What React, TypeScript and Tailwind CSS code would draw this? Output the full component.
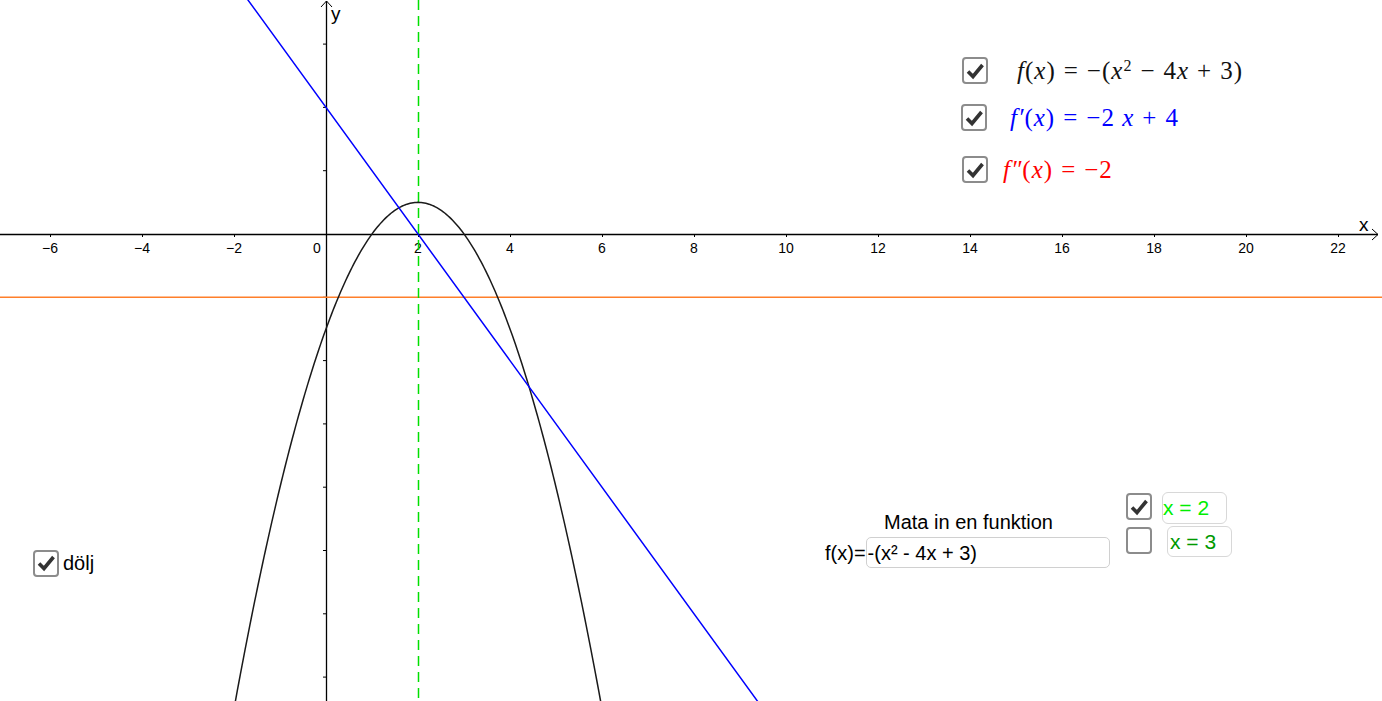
import type { ReactNode } from 'react';

const W = 1382;
const H = 701;
const OX = 326; // pixel of x = 0
const OY = 234; // pixel of y = 0
const SX = 46; // px per unit on x
const SY = 31.65; // px per unit on y

const px = (x: number) => OX + x * SX;
const py = (y: number) => OY - y * SY;

function plot(fn: (x: number) => number, from: number, to: number, steps = 240) {
  const pts: string[] = [];
  for (let i = 0; i <= steps; i++) {
    const x = from + ((to - from) * i) / steps;
    pts.push(`${px(x).toFixed(2)},${py(fn(x)).toFixed(2)}`);
  }
  return 'M' + pts.join(' L');
}

function Graph() {
  const xTicks = [-6, -4, -2, 2, 4, 6, 8, 10, 12, 14, 16, 18, 20, 22];
  const yTicks = [6, 4, 2, -2, -4, -6, -8, -10, -12, -14];
  return (
    <svg width={W} height={H} className="block" style={{ fontFamily: '"Liberation Sans", Arial, sans-serif' }}>
      {/* axes */}
      <line x1={0} y1={OY + 0.5} x2={1378} y2={OY + 0.5} stroke="#000" strokeWidth={1.3} />
      <polyline points={`1372,${OY - 5} 1378,${OY + 0.5} 1372,${OY + 6}`} fill="none" stroke="#000" strokeWidth={1} />
      <line x1={OX + 0.5} y1={1} x2={OX + 0.5} y2={H} stroke="#000" strokeWidth={1.3} />
      <polyline points={`${OX - 5},7 ${OX + 0.5},1 ${OX + 6},7`} fill="none" stroke="#000" strokeWidth={1} />

      {xTicks.map((k) => (
        <g key={k}>
          <line x1={px(k) + 0.5} y1={OY} x2={px(k) + 0.5} y2={OY + 3} stroke="#000" strokeWidth={1} />
          <text x={px(k)} y={253} fontSize={14} textAnchor="middle" fill="#000">
            {k < 0 ? `\u2212${-k}` : k}
          </text>
        </g>
      ))}
      <text x={317} y={253} fontSize={14} textAnchor="middle" fill="#000">
        0
      </text>
      {yTicks.map((k) => (
        <line key={k} x1={OX - 3} y1={py(k)} x2={OX} y2={py(k)} stroke="#000" strokeWidth={1} />
      ))}
      <text x={1359} y={231} fontSize={19} fill="#000">
        x
      </text>
      <text x={331} y={20} fontSize={19} fill="#000">
        y
      </text>

      {/* f''(x) = -2 */}
      <line x1={0} y1={py(-2)} x2={W} y2={py(-2)} stroke="#ff7f2a" strokeWidth={1.5} />
      {/* x = 2 */}
      <line x1={px(2) + 0.5} y1={0} x2={px(2) + 0.5} y2={H} stroke="#00e000" strokeWidth={1.5} strokeDasharray="10 6" />
      {/* f(x) */}
      <path d={plot((x) => -(x * x - 4 * x + 3), -2.1, 6.1)} fill="none" stroke="#1a1a1a" strokeWidth={1.5} />
      {/* f'(x) */}
      <path d={plot((x) => -2 * x + 4, -2, 10, 2)} fill="none" stroke="#0000ff" strokeWidth={1.5} />
    </svg>
  );
}

function CheckBox({ checked }: { checked: boolean }) {
  return (
    <div className="flex h-[27px] w-[26px] shrink-0 items-center justify-center rounded-[4px] border-2 border-[#8c8c8c] bg-white">
      {checked && (
        <svg width="20" height="20" viewBox="0 0 20 20">
          <polyline points="3,10.5 8,15.5 17.5,4" fill="none" stroke="#333" strokeWidth={3.6} strokeLinejoin="miter" />
        </svg>
      )}
    </div>
  );
}

const I = ({ children }: { children: ReactNode }) => <span className="italic">{children}</span>;
const Op = ({ children }: { children: ReactNode }) => <span className="mx-[8px]">{children}</span>;

export default function App() {
  const serif = { fontFamily: '"Liberation Serif", "Times New Roman", serif' };
  return (
    <div className="relative h-[701px] w-[1382px] overflow-hidden bg-white">
      <Graph />

      {/* formulas */}
      <div className="absolute left-[961px] top-[57px] flex flex-col gap-[20px]" style={serif}>
        <div className="ml-px flex items-center">
          <CheckBox checked />
          <div className="ml-[29px] whitespace-nowrap text-[25px] leading-none tracking-[1px] text-[#111]">
            <I>f</I>(<I>x</I>)<Op>=</Op>−(<I>x</I>
            <sup className="text-[16px]">2</sup>
            <Op>−</Op>4<I>x</I>
            <Op>+</Op>3)
          </div>
        </div>
        <div className="flex items-center">
          <CheckBox checked />
          <div className="ml-[23px] whitespace-nowrap text-[25px] leading-none tracking-[1px] text-[#0000ff]">
            <I>f′</I>(<I>x</I>)<Op>=</Op>−2 <I>x</I>
            <Op>+</Op>4
          </div>
        </div>
        <div className="ml-px mt-[5px] flex items-center">
          <CheckBox checked />
          <div className="ml-[15px] whitespace-nowrap text-[25px] leading-none tracking-[1px] text-[#ff0000]">
            <I>f″</I>(<I>x</I>)<Op>=</Op>−2
          </div>
        </div>
      </div>

      <div style={{ fontFamily: '"Liberation Sans", Arial, sans-serif' }}>
        {/* dölj */}
        <div className="absolute left-[33px] top-[548px] flex items-center gap-[4px]">
          <CheckBox checked />
          <span className="text-[20px] text-black">dölj</span>
        </div>

        {/* function input */}
        <div className="absolute left-[825px] top-[509px] flex flex-col">
          <div className="ml-[59px] text-[20px] leading-[26px] text-black">Mata in en funktion</div>
          <div className="mt-[2px] flex items-center">
            <span className="text-[20px] text-black">f(x)=</span>
            <div className="flex h-[31px] w-[244px] items-center rounded-[5px] border border-[#d0d0d0] pl-[1px] text-[20px] text-black">
              -(x² - 4x + 3)
            </div>
          </div>
        </div>

        {/* x = 2 / x = 3 */}
        <div className="absolute left-[1126px] top-[492px] flex flex-col gap-[2px]">
          <div className="flex items-start gap-[10px]">
            <div className="mt-px">
              <CheckBox checked />
            </div>
            <div className="flex h-[32px] w-[65px] items-center rounded-[6px] border border-[#d8d8d8] text-[21px] text-[#00ee00]">
              x = 2
            </div>
          </div>
          <div className="flex items-start gap-[15px]">
            <div className="mt-px">
              <CheckBox checked={false} />
            </div>
            <div className="flex h-[31px] w-[65px] items-center rounded-[6px] border border-[#d8d8d8] pl-[2px] text-[21px] text-[#009900]">
              x = 3
            </div>
          </div>
        </div>
      </div>
    </div>
  );
}
